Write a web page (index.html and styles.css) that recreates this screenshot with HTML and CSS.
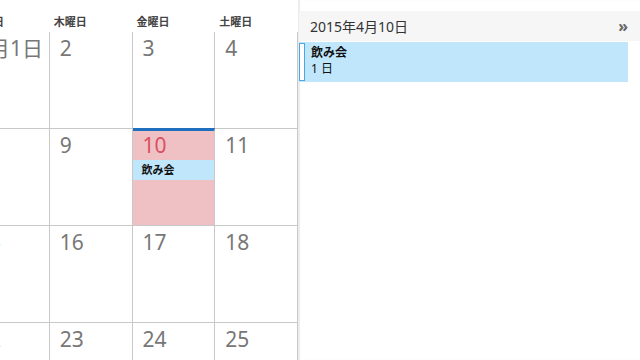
FILE: index.html
```html
<!DOCTYPE html>
<html lang="ja">
<head>
    <meta charset="UTF-8">
    <title>カレンダー</title>
    <link rel="stylesheet" href="styles.css">
</head>
<body>
    <div class="page">
        <div class="calendar">
            <div class="day-names">
                <div class="day-name">水曜日</div>
                <div class="day-name">木曜日</div>
                <div class="day-name">金曜日</div>
                <div class="day-name">土曜日</div>
            </div>
            <div class="week">
                <div class="cell"><span class="date">4月1日</span></div>
                <div class="cell"><span class="date">2</span></div>
                <div class="cell"><span class="date">3</span></div>
                <div class="cell"><span class="date">4</span></div>
            </div>
            <div class="week">
                <div class="cell"><span class="date">8</span></div>
                <div class="cell"><span class="date">9</span></div>
                <div class="cell today">
                    <span class="date">10</span>
                    <div class="cell-event">飲み会</div>
                </div>
                <div class="cell"><span class="date">11</span></div>
            </div>
            <div class="week">
                <div class="cell"><span class="date">15</span></div>
                <div class="cell"><span class="date">16</span></div>
                <div class="cell"><span class="date">17</span></div>
                <div class="cell"><span class="date">18</span></div>
            </div>
            <div class="week">
                <div class="cell"><span class="date">22</span></div>
                <div class="cell"><span class="date">23</span></div>
                <div class="cell"><span class="date">24</span></div>
                <div class="cell"><span class="date">25</span></div>
            </div>
        </div>
        <div class="agenda">
            <div class="agenda-head">
                <span class="agenda-title">2015年4月10日</span>
                <span class="agenda-more">&raquo;</span>
            </div>
            <div class="agenda-item">
                <div class="agenda-mark"></div>
                <div class="agenda-text">
                    <div class="agenda-name">飲み会</div>
                    <div class="agenda-time">1 日</div>
                </div>
            </div>
        </div>
    </div>
</body>
</html>
```

FILE: styles.css
```css
:root {
    --line: #c8c8c8;
    --date-color: #777;
    --today-bg: #efc1c5;
    --today-bar: #1e6fbd;
    --event-bg: #c0e6fb;
}
body, html { margin: 0; padding: 0; width: 640px; height: 360px; overflow: hidden; background: #fff; font-family: "Noto Sans", "Noto Sans CJK JP", sans-serif; }
.page { display: flex; height: 360px; }
.calendar { flex: none; width: 331px; margin-left: -33px; }
.day-names { display: grid; grid-template-columns: repeat(4, 1fr); height: 32px; }
.day-name { font-size: 11px; font-weight: bold; color: #444; padding: 15px 0 0 4px; line-height: 14px; }
.week { display: grid; grid-template-columns: repeat(4, 1fr); height: 97px; }
.cell { border-right: 1px solid var(--line); border-bottom: 1px solid var(--line); }
.date { display: block; font-size: 21px; line-height: 24px; color: var(--date-color); padding: 4px 0 0 10px; }
.today { background: var(--today-bg); border-top: 3px solid var(--today-bar); margin-top: -1px; }
.today .date { color: #d9505e; padding-top: 2px; }
.cell-event { background: var(--event-bg); margin-top: 3px; height: 20px; line-height: 20px; font-size: 11px; font-weight: bold; color: #111; padding-left: 9px; }
.agenda { flex: 1; box-shadow: inset 2px 0 1px #ececec; padding-top: 11px; }
.agenda-head { display: flex; justify-content: space-between; align-items: center; height: 30px; margin-left: 1px; background: #f6f6f6; padding: 0 12px 0 11px; }
.agenda-title { font-size: 14px; color: #333; }
.agenda-more { font-size: 16px; font-weight: bold; color: #666; line-height: 16px; }
.agenda-item { display: flex; margin: 1px 12px 0 1px; height: 40px; background: var(--event-bg); }
.agenda-mark { width: 4px; margin: 1px 0; background: #fff; border: 1px solid #4aa8e0; }
.agenda-text { padding: 3px 0 0 6px; font-size: 12px; color: #111; line-height: 16px; }
.agenda-name { font-weight: bold; }
```
